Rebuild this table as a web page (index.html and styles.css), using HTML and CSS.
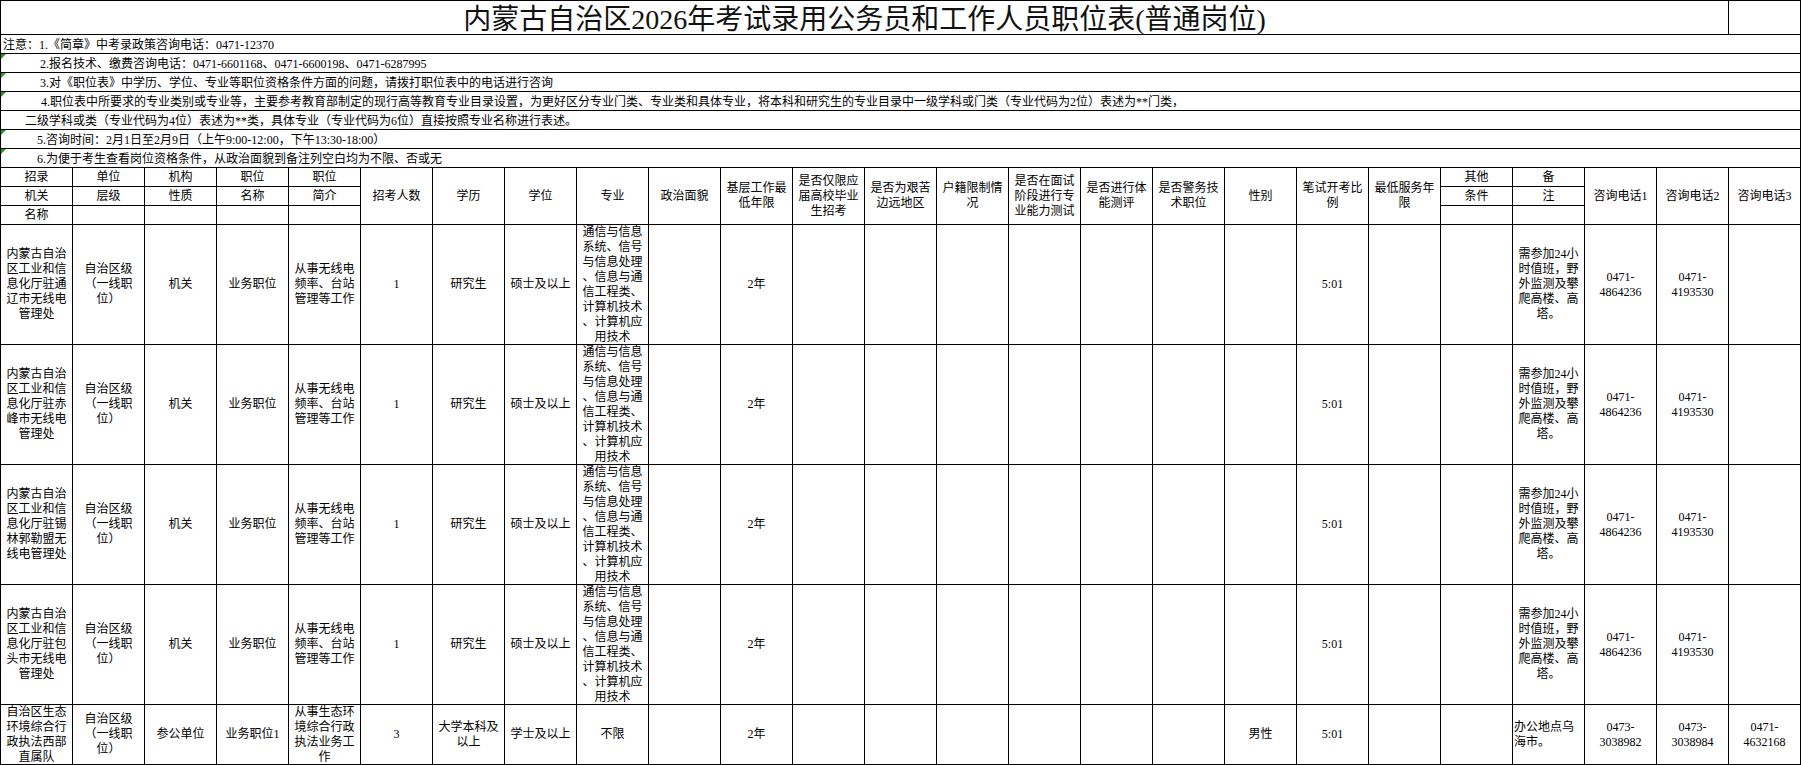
FILE: index.html
```html
<!DOCTYPE html>
<html lang="zh-CN">
<head>
<meta charset="utf-8">
<title>职位表</title>
<link rel="stylesheet" href="styles.css">
</head>
<body>
<div class="sheet">
  <div class="c title">内蒙古自治区2026年考试录用公务员和工作人员职位表(普通岗位)</div>
  <div class="c"></div>

  <div class="c note i0">注意：1.《简章》中考录政策咨询电话：0471-12370</div>
  <div class="c note mark i39">2.报名技术、缴费咨询电话：0471-6601168、0471-6600198、0471-6287995</div>
  <div class="c note mark i39">3.对《职位表》中学历、学位、专业等职位资格条件方面的问题，请拨打职位表中的电话进行咨询</div>
  <div class="c note mark i40">4.职位表中所要求的专业类别或专业等，主要参考教育部制定的现行高等教育专业目录设置，为更好区分专业门类、专业类和具体专业，将本科和研究生的专业目录中一级学科或门类（专业代码为2位）表述为**门类，</div>
  <div class="c note i24">二级学科或类（专业代码为4位）表述为**类，具体专业（专业代码为6位）直接按照专业名称进行表述。</div>
  <div class="c note mark i36">5.咨询时间：2月1日至2月9日（上午9:00-12:00，下午13:30-18:00）</div>
  <div class="c note mark i36">6.为便于考生查看岗位资格条件，从政治面貌到备注列空白均为不限、否或无</div>

  <!-- header row A -->
  <div class="c">招录</div>
  <div class="c">单位</div>
  <div class="c">机构</div>
  <div class="c">职位</div>
  <div class="c">职位</div>
  <div class="c tall">招考人数</div>
  <div class="c tall">学历</div>
  <div class="c tall">学位</div>
  <div class="c tall">专业</div>
  <div class="c tall">政治面貌</div>
  <div class="c tall">基层工作最<br>低年限</div>
  <div class="c tall">是否仅限应<br>届高校毕业<br>生招考</div>
  <div class="c tall">是否为艰苦<br>边远地区</div>
  <div class="c tall">户籍限制情<br>况</div>
  <div class="c tall">是否在面试<br>阶段进行专<br>业能力测试</div>
  <div class="c tall">是否进行体<br>能测评</div>
  <div class="c tall">是否警务技<br>术职位</div>
  <div class="c tall">性别</div>
  <div class="c tall">笔试开考比<br>例</div>
  <div class="c tall">最低服务年<br>限</div>
  <div class="c">其他</div>
  <div class="c">备</div>
  <div class="c tall">咨询电话1</div>
  <div class="c tall">咨询电话2</div>
  <div class="c tall">咨询电话3</div>
  <!-- header row B -->
  <div class="c">机关</div>
  <div class="c">层级</div>
  <div class="c">性质</div>
  <div class="c">名称</div>
  <div class="c">简介</div>
  <div class="c">条件</div>
  <div class="c">注</div>
  <!-- header row C -->
  <div class="c">名称</div>
  <div class="c"></div>
  <div class="c"></div>
  <div class="c"></div>
  <div class="c"></div>
  <div class="c"></div>
  <div class="c"></div>

  <!-- data row 1 -->
  <div class="c">内蒙古自治<br>区工业和信<br>息化厅驻通<br>辽市无线电<br>管理处</div>
  <div class="c">自治区级<br>（一线职<br>位）</div>
  <div class="c">机关</div>
  <div class="c">业务职位</div>
  <div class="c">从事无线电<br>频率、台站<br>管理等工作</div>
  <div class="c">1</div>
  <div class="c">研究生</div>
  <div class="c">硕士及以上</div>
  <div class="c">通信与信息<br>系统、信号<br>与信息处理<br>、信息与通<br>信工程类、<br>计算机技术<br>、计算机应<br>用技术</div>
  <div class="c"></div>
  <div class="c">2年</div>
  <div class="c"></div><div class="c"></div><div class="c"></div><div class="c"></div><div class="c"></div><div class="c"></div>
  <div class="c"></div>
  <div class="c">5:01</div>
  <div class="c"></div><div class="c"></div>
  <div class="c">需参加24小<br>时值班，野<br>外监测及攀<br>爬高楼、高<br>塔。</div>
  <div class="c">0471-<br>4864236</div>
  <div class="c">0471-<br>4193530</div>
  <div class="c"></div>

  <!-- data row 2 -->
  <div class="c">内蒙古自治<br>区工业和信<br>息化厅驻赤<br>峰市无线电<br>管理处</div>
  <div class="c">自治区级<br>（一线职<br>位）</div>
  <div class="c">机关</div>
  <div class="c">业务职位</div>
  <div class="c">从事无线电<br>频率、台站<br>管理等工作</div>
  <div class="c">1</div>
  <div class="c">研究生</div>
  <div class="c">硕士及以上</div>
  <div class="c">通信与信息<br>系统、信号<br>与信息处理<br>、信息与通<br>信工程类、<br>计算机技术<br>、计算机应<br>用技术</div>
  <div class="c"></div>
  <div class="c">2年</div>
  <div class="c"></div><div class="c"></div><div class="c"></div><div class="c"></div><div class="c"></div><div class="c"></div>
  <div class="c"></div>
  <div class="c">5:01</div>
  <div class="c"></div><div class="c"></div>
  <div class="c">需参加24小<br>时值班，野<br>外监测及攀<br>爬高楼、高<br>塔。</div>
  <div class="c">0471-<br>4864236</div>
  <div class="c">0471-<br>4193530</div>
  <div class="c"></div>

  <!-- data row 3 -->
  <div class="c">内蒙古自治<br>区工业和信<br>息化厅驻锡<br>林郭勒盟无<br>线电管理处</div>
  <div class="c">自治区级<br>（一线职<br>位）</div>
  <div class="c">机关</div>
  <div class="c">业务职位</div>
  <div class="c">从事无线电<br>频率、台站<br>管理等工作</div>
  <div class="c">1</div>
  <div class="c">研究生</div>
  <div class="c">硕士及以上</div>
  <div class="c">通信与信息<br>系统、信号<br>与信息处理<br>、信息与通<br>信工程类、<br>计算机技术<br>、计算机应<br>用技术</div>
  <div class="c"></div>
  <div class="c">2年</div>
  <div class="c"></div><div class="c"></div><div class="c"></div><div class="c"></div><div class="c"></div><div class="c"></div>
  <div class="c"></div>
  <div class="c">5:01</div>
  <div class="c"></div><div class="c"></div>
  <div class="c">需参加24小<br>时值班，野<br>外监测及攀<br>爬高楼、高<br>塔。</div>
  <div class="c">0471-<br>4864236</div>
  <div class="c">0471-<br>4193530</div>
  <div class="c"></div>

  <!-- data row 4 -->
  <div class="c">内蒙古自治<br>区工业和信<br>息化厅驻包<br>头市无线电<br>管理处</div>
  <div class="c">自治区级<br>（一线职<br>位）</div>
  <div class="c">机关</div>
  <div class="c">业务职位</div>
  <div class="c">从事无线电<br>频率、台站<br>管理等工作</div>
  <div class="c">1</div>
  <div class="c">研究生</div>
  <div class="c">硕士及以上</div>
  <div class="c">通信与信息<br>系统、信号<br>与信息处理<br>、信息与通<br>信工程类、<br>计算机技术<br>、计算机应<br>用技术</div>
  <div class="c"></div>
  <div class="c">2年</div>
  <div class="c"></div><div class="c"></div><div class="c"></div><div class="c"></div><div class="c"></div><div class="c"></div>
  <div class="c"></div>
  <div class="c">5:01</div>
  <div class="c"></div><div class="c"></div>
  <div class="c">需参加24小<br>时值班，野<br>外监测及攀<br>爬高楼、高<br>塔。</div>
  <div class="c">0471-<br>4864236</div>
  <div class="c">0471-<br>4193530</div>
  <div class="c"></div>

  <!-- data row 5 -->
  <div class="c">自治区生态<br>环境综合行<br>政执法西部<br>直属队</div>
  <div class="c">自治区级<br>（一线职<br>位）</div>
  <div class="c">参公单位</div>
  <div class="c">业务职位1</div>
  <div class="c">从事生态环<br>境综合行政<br>执法业务工<br>作</div>
  <div class="c">3</div>
  <div class="c">大学本科及<br>以上</div>
  <div class="c">学士及以上</div>
  <div class="c">不限</div>
  <div class="c"></div>
  <div class="c">2年</div>
  <div class="c"></div><div class="c"></div><div class="c"></div><div class="c"></div><div class="c"></div><div class="c"></div>
  <div class="c">男性</div>
  <div class="c">5:01</div>
  <div class="c"></div><div class="c"></div>
  <div class="c left">办公地点乌<br>海市。</div>
  <div class="c">0473-<br>3038982</div>
  <div class="c">0473-<br>3038984</div>
  <div class="c">0471-<br>4632168</div>
</div>
</body>
</html>
```

FILE: styles.css
```css
html, body {
  margin: 0;
  padding: 0;
  background: #fff;
}

body {
  font-family: "Liberation Serif", "Noto Sans CJK SC", serif;
  font-size: 12px;
  color: #000;
}

.sheet {
  display: grid;
  grid-template-columns: repeat(25, 71px);
  grid-template-rows: 33px repeat(7, 18px) repeat(3, 18px) repeat(4, 119px) 59px;
  gap: 1px;
  padding: 1px;
  background: #000;
  width: max-content;
  overflow: hidden;
}

.c {
  background: #fff;
  display: flex;
  align-items: center;
  justify-content: center;
  text-align: center;
  line-height: 15px;
  white-space: nowrap;
  overflow: hidden;
  min-width: 0;
  min-height: 0;
}

.title {
  grid-column: span 24;
  font-size: 28px;
  line-height: 30px;
  padding-top: 5px;
  box-sizing: border-box;
  color: #111;
}

.note {
  grid-column: span 25;
  justify-content: flex-start;
  text-align: left;
  line-height: 18px;
  padding-top: 1px;
  box-sizing: border-box;
  position: relative;
}

.mark::before {
  content: "";
  position: absolute;
  left: 0;
  top: 0;
  width: 0;
  height: 0;
  border-style: solid;
  border-width: 5px 5px 0 0;
  border-color: #1e9a1e transparent transparent transparent;
}

.i0 { padding-left: 2px; }
.i24 { padding-left: 24px; }
.i36 { padding-left: 36px; }
.i39 { padding-left: 39px; }
.i40 { padding-left: 40px; }

.tall {
  grid-row: span 3;
}

.left {
  justify-content: flex-start;
  text-align: left;
  padding-left: 1px;
}
```
